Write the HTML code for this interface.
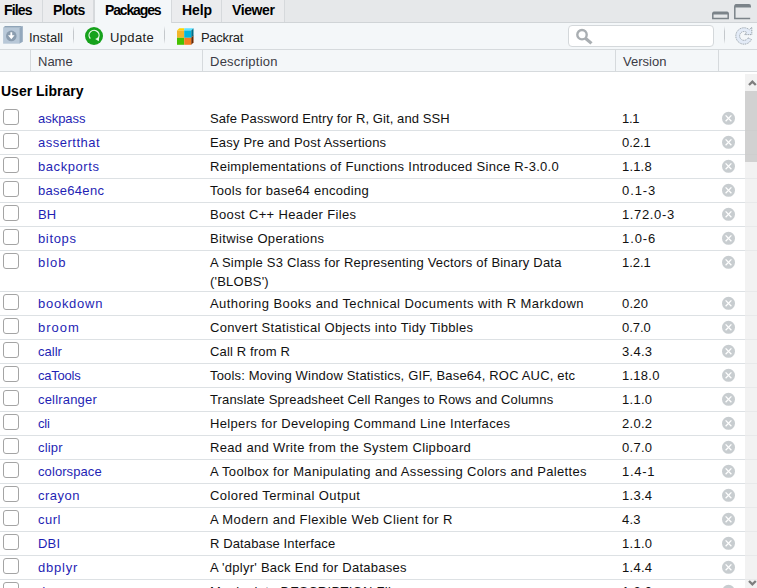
<!DOCTYPE html>
<html><head><meta charset="utf-8"><style>
*{box-sizing:border-box}
html,body{margin:0;padding:0;width:757px;height:588px;overflow:hidden;background:#fff;font-family:"Liberation Sans",sans-serif;font-size:13px;color:#000}
.abs{position:absolute}
#tabs{position:absolute;left:0;top:0;width:757px;height:23px;background:#e6e8ea;border-bottom:1px solid #d0d4d7}
.tab{position:absolute;top:0;height:22px;font-weight:bold;font-size:14px;line-height:20px;letter-spacing:-0.4px;border-right:1px solid #d6d9dc;color:#000;background:#ebecee}
.tab.act{background:#f4f7f9;height:23px;border-left:1px solid #d6d9dc}
#toolbar{position:absolute;left:0;top:23px;width:757px;height:27px;background:#f4f7f9;border-bottom:1px solid #d6dadd}
.tl{position:absolute;top:6px;font-size:13px;color:#222;line-height:17px}
.sep{position:absolute;top:3px;width:1px;height:18px;background:linear-gradient(#f4f7f9,#c4c8cc 30%,#c4c8cc 70%,#f4f7f9)}
#search{position:absolute;left:568px;top:2px;width:146px;height:22px;background:#fff;border:1px solid #d4d8db;border-radius:4px}
#hdr{position:absolute;left:0;top:50px;width:757px;height:22px;background:#f4f7f9;border-bottom:1px solid #d6dadd}
.hd{position:absolute;top:0;height:21px;line-height:24px;color:#3b3b45;font-size:13px}
.vd{position:absolute;top:0;width:1px;height:21px;background:#d6dadd}
.row{position:absolute;left:0;width:757px;border-bottom:1px solid #dde1e4}
.cb{position:absolute;left:3px;top:2px;width:16px;height:16px;border:1.2px solid #a4a4a4;border-radius:3px;background:#fff}
.nm{position:absolute;left:38px;top:4px;color:#1f1fb4;line-height:15px}
.ds{position:absolute;left:210px;color:#111;line-height:19px;top:2px}
.vr{position:absolute;left:622px;top:4px;color:#111;line-height:15px}
.rm{position:absolute;left:721px;top:4px}
#sb{position:absolute;left:745px;top:74px;width:12px;height:514px;background:rgba(236,236,236,0.7)}
</style></head><body>
<div id="tabs">
  <div class="tab" style="left:0;width:43px;padding-left:4px;letter-spacing:-0.85px">Files</div>
  <div class="tab" style="left:43px;width:51px;padding-left:10px;letter-spacing:-0.5px">Plots</div>
  <div class="tab act" style="left:94px;width:78px;padding-left:10px;letter-spacing:-1.15px">Packages</div>
  <div class="tab" style="left:172px;width:50px;padding-left:10px;letter-spacing:-0.1px">Help</div>
  <div class="tab" style="left:222px;width:63px;padding-left:10px">Viewer</div>
  <svg class="abs" style="left:711px;top:3px" width="46" height="18" viewBox="0 0 46 18">
    <path d="M1.8 10.5 L1.8 15.4 L17.2 15.4 L17.2 10.5" fill="none" stroke="#7b8389" stroke-width="1.5"/>
    <path d="M1 11.5 Q1 8.4 3 8.4 L16 8.4 Q18 8.4 18 11.5 Z" fill="#7b8389"/>
    <path d="M23.8 4 L23.8 15.4 L39.2 15.4" fill="none" stroke="#7b8389" stroke-width="1.5"/>
    <path d="M23 4.6 Q23 1.1 25 1.1 L38 1.1 Q40 1.1 40 3.5 L40 4.6 Z" fill="#7b8389"/>
  </svg>
</div>
<div id="toolbar">
  <svg class="abs" style="left:2px;top:2px" width="22" height="20" viewBox="0 0 22 20">
    <path d="M1.1 2.8 L3 1.1 L20.8 1.1 L17.2 2.8 Z" fill="#8fa4b8"/>
    <path d="M17.2 2.8 L20.8 1.1 L20.8 16.8 L17.2 18.7 Z" fill="#93a8bd"/>
    <rect x="1.1" y="2.8" width="16.1" height="15.9" fill="#b8c8d8"/>
    <circle cx="9.3" cy="10.9" r="5.3" fill="#8b9daf"/>
    <path d="M8.4 7.3 H10.2 V10.3 H12.6 L9.3 14.3 L6 10.3 H8.4 Z" fill="#fff"/>
  </svg>
  <span class="tl" style="left:29px">Install</span>
  <div class="sep" style="left:73px"></div>
  <svg class="abs" style="left:84px;top:3px" width="20" height="20" viewBox="0 0 20 20">
    <circle cx="10" cy="10" r="9" fill="#16a21c"/>
    <path d="M6.3 12.6 A5 5 0 1 1 13.6 12.8" fill="none" stroke="#e8f8e8" stroke-width="1.3"/>
    <path d="M11.2 12.9 L15.2 11 L14.8 15.2 Z" fill="#e8f8e8"/>
  </svg>
  <span class="tl" style="left:110px;letter-spacing:0.35px">Update</span>
  <div class="sep" style="left:164px"></div>
  <svg class="abs" style="left:176px;top:4px" width="19" height="19" viewBox="0 0 19 19">
    <path d="M1 3.5 L3 1 L17.5 1 L17.5 15.5 L15.5 18 L1 18 Z" fill="#000" opacity="0"/>
    <path d="M1 3.5 L3.3 1.2 L8.5 1.2 L8 3.5 Z" fill="#ffd400"/>
    <path d="M8 3.5 L8.5 1.2 L17.5 1.2 L15.3 3.5 Z" fill="#5ee2ff"/>
    <rect x="1" y="3.5" width="7.2" height="7.3" fill="#f1b42a"/>
    <rect x="8.2" y="3.5" width="7.1" height="7.3" fill="#00b6dd"/>
    <rect x="1" y="10.8" width="7.2" height="7" fill="#46c100"/>
    <rect x="8.2" y="10.8" width="7.1" height="7" fill="#f57e22"/>
    <path d="M15.3 3.5 L17.5 1.2 L17.5 8.6 L15.3 10.8 Z" fill="#006f88"/>
    <path d="M15.3 10.8 L17.5 8.6 L17.5 15.6 L15.3 17.8 Z" fill="#6a2800"/>
  </svg>
  <span class="tl" style="left:201px;letter-spacing:-0.3px">Packrat</span>
  <div id="search">
    <svg class="abs" style="left:6px;top:2px" width="20" height="18" viewBox="0 0 20 18">
      <circle cx="7" cy="6.7" r="4.7" fill="none" stroke="#a9aeb2" stroke-width="2.4"/>
      <path d="M10.4 10.2 L16.5 15.4" stroke="#a9aeb2" stroke-width="3.2"/>
    </svg>
  </div>
  <div class="sep" style="left:724px"></div>
  <svg class="abs" style="left:734px;top:3px" width="23" height="21" viewBox="0 0 23 21">
    <path d="M17.43 13.47 A8.2 8.2 0 1 1 15.3 3.7 L17.8 1.2 L17.8 8.6 L10.6 8.6 L12.9 6.6 A4.4 4.4 0 1 0 13.99 11.86 Z" fill="#e3ebf7" stroke="#8f98a2" stroke-width="0.9" stroke-dasharray="1.1 0.7"/>
  </svg>
</div>
<div id="hdr">
  <div class="vd" style="left:30px"></div>
  <span class="hd" style="left:38px">Name</span>
  <div class="vd" style="left:202px"></div>
  <span class="hd" style="left:210px;letter-spacing:0.25px">Description</span>
  <div class="vd" style="left:615px"></div>
  <span class="hd" style="left:623px">Version</span>
  <div class="vd" style="left:718px"></div>
</div>
<div class="abs" style="left:1px;top:83px;font-weight:bold;font-size:14px">User Library</div>
<div class="row" style="top:107px;height:24px"><div class="cb"></div><span class="nm" style="letter-spacing:-0.033px">askpass</span><span class="ds" style="letter-spacing:0.089px">Safe Password Entry for R, Git, and SSH</span><span class="vr" style="letter-spacing:-0.250px">1.1</span><svg class="rm" width="15" height="15" viewBox="0 0 15 15"><circle cx="7.5" cy="7.3" r="6.5" fill="#c8cdd0"/><path d="M4.6 4.4L10.4 10.2M10.4 4.4L4.6 10.2" stroke="#fff" stroke-width="1.3"/></svg></div>
<div class="row" style="top:131px;height:24px"><div class="cb"></div><span class="nm" style="letter-spacing:0.500px">assertthat</span><span class="ds" style="letter-spacing:0.178px">Easy Pre and Post Assertions</span><span class="vr" style="letter-spacing:-0.025px">0.2.1</span><svg class="rm" width="15" height="15" viewBox="0 0 15 15"><circle cx="7.5" cy="7.3" r="6.5" fill="#c8cdd0"/><path d="M4.6 4.4L10.4 10.2M10.4 4.4L4.6 10.2" stroke="#fff" stroke-width="1.3"/></svg></div>
<div class="row" style="top:155px;height:24px"><div class="cb"></div><span class="nm" style="letter-spacing:0.575px">backports</span><span class="ds" style="letter-spacing:0.289px">Reimplementations of Functions Introduced Since R-3.0.0</span><span class="vr" style="letter-spacing:0.175px">1.1.8</span><svg class="rm" width="15" height="15" viewBox="0 0 15 15"><circle cx="7.5" cy="7.3" r="6.5" fill="#c8cdd0"/><path d="M4.6 4.4L10.4 10.2M10.4 4.4L4.6 10.2" stroke="#fff" stroke-width="1.3"/></svg></div>
<div class="row" style="top:179px;height:24px"><div class="cb"></div><span class="nm" style="letter-spacing:0.287px">base64enc</span><span class="ds" style="letter-spacing:0.292px">Tools for base64 encoding</span><span class="vr" style="letter-spacing:0.900px">0.1-3</span><svg class="rm" width="15" height="15" viewBox="0 0 15 15"><circle cx="7.5" cy="7.3" r="6.5" fill="#c8cdd0"/><path d="M4.6 4.4L10.4 10.2M10.4 4.4L4.6 10.2" stroke="#fff" stroke-width="1.3"/></svg></div>
<div class="row" style="top:203px;height:24px"><div class="cb"></div><span class="nm" style="letter-spacing:0.000px">BH</span><span class="ds" style="letter-spacing:0.348px">Boost C++ Header Files</span><span class="vr" style="letter-spacing:0.629px">1.72.0-3</span><svg class="rm" width="15" height="15" viewBox="0 0 15 15"><circle cx="7.5" cy="7.3" r="6.5" fill="#c8cdd0"/><path d="M4.6 4.4L10.4 10.2M10.4 4.4L4.6 10.2" stroke="#fff" stroke-width="1.3"/></svg></div>
<div class="row" style="top:227px;height:24px"><div class="cb"></div><span class="nm" style="letter-spacing:0.640px">bitops</span><span class="ds" style="letter-spacing:0.329px">Bitwise Operations</span><span class="vr" style="letter-spacing:0.900px">1.0-6</span><svg class="rm" width="15" height="15" viewBox="0 0 15 15"><circle cx="7.5" cy="7.3" r="6.5" fill="#c8cdd0"/><path d="M4.6 4.4L10.4 10.2M10.4 4.4L4.6 10.2" stroke="#fff" stroke-width="1.3"/></svg></div>
<div class="row" style="top:251px;height:41px"><div class="cb"></div><span class="nm" style="letter-spacing:0.933px">blob</span><span class="ds" style="letter-spacing:0.211px">A Simple S3 Class for Representing Vectors of Binary Data<br>('BLOBS')</span><span class="vr" style="letter-spacing:-0.025px">1.2.1</span><svg class="rm" width="15" height="15" viewBox="0 0 15 15"><circle cx="7.5" cy="7.3" r="6.5" fill="#c8cdd0"/><path d="M4.6 4.4L10.4 10.2M10.4 4.4L4.6 10.2" stroke="#fff" stroke-width="1.3"/></svg></div>
<div class="row" style="top:292px;height:24px"><div class="cb"></div><span class="nm" style="letter-spacing:0.729px">bookdown</span><span class="ds" style="letter-spacing:0.417px">Authoring Books and Technical Documents with R Markdown</span><span class="vr" style="letter-spacing:0.233px">0.20</span><svg class="rm" width="15" height="15" viewBox="0 0 15 15"><circle cx="7.5" cy="7.3" r="6.5" fill="#c8cdd0"/><path d="M4.6 4.4L10.4 10.2M10.4 4.4L4.6 10.2" stroke="#fff" stroke-width="1.3"/></svg></div>
<div class="row" style="top:316px;height:24px"><div class="cb"></div><span class="nm" style="letter-spacing:1.000px">broom</span><span class="ds" style="letter-spacing:0.311px">Convert Statistical Objects into Tidy Tibbles</span><span class="vr" style="letter-spacing:-0.025px">0.7.0</span><svg class="rm" width="15" height="15" viewBox="0 0 15 15"><circle cx="7.5" cy="7.3" r="6.5" fill="#c8cdd0"/><path d="M4.6 4.4L10.4 10.2M10.4 4.4L4.6 10.2" stroke="#fff" stroke-width="1.3"/></svg></div>
<div class="row" style="top:340px;height:24px"><div class="cb"></div><span class="nm" style="letter-spacing:0.025px">callr</span><span class="ds" style="letter-spacing:0.150px">Call R from R</span><span class="vr" style="letter-spacing:0.275px">3.4.3</span><svg class="rm" width="15" height="15" viewBox="0 0 15 15"><circle cx="7.5" cy="7.3" r="6.5" fill="#c8cdd0"/><path d="M4.6 4.4L10.4 10.2M10.4 4.4L4.6 10.2" stroke="#fff" stroke-width="1.3"/></svg></div>
<div class="row" style="top:364px;height:24px"><div class="cb"></div><span class="nm" style="letter-spacing:-0.233px">caTools</span><span class="ds" style="letter-spacing:0.181px">Tools: Moving Window Statistics, GIF, Base64, ROC AUC, etc</span><span class="vr" style="letter-spacing:0.260px">1.18.0</span><svg class="rm" width="15" height="15" viewBox="0 0 15 15"><circle cx="7.5" cy="7.3" r="6.5" fill="#c8cdd0"/><path d="M4.6 4.4L10.4 10.2M10.4 4.4L4.6 10.2" stroke="#fff" stroke-width="1.3"/></svg></div>
<div class="row" style="top:388px;height:24px"><div class="cb"></div><span class="nm" style="letter-spacing:0.189px">cellranger</span><span class="ds" style="letter-spacing:0.133px">Translate Spreadsheet Cell Ranges to Rows and Columns</span><span class="vr" style="letter-spacing:0.275px">1.1.0</span><svg class="rm" width="15" height="15" viewBox="0 0 15 15"><circle cx="7.5" cy="7.3" r="6.5" fill="#c8cdd0"/><path d="M4.6 4.4L10.4 10.2M10.4 4.4L4.6 10.2" stroke="#fff" stroke-width="1.3"/></svg></div>
<div class="row" style="top:412px;height:24px"><div class="cb"></div><span class="nm" style="letter-spacing:-0.150px">cli</span><span class="ds" style="letter-spacing:0.342px">Helpers for Developing Command Line Interfaces</span><span class="vr" style="letter-spacing:0.275px">2.0.2</span><svg class="rm" width="15" height="15" viewBox="0 0 15 15"><circle cx="7.5" cy="7.3" r="6.5" fill="#c8cdd0"/><path d="M4.6 4.4L10.4 10.2M10.4 4.4L4.6 10.2" stroke="#fff" stroke-width="1.3"/></svg></div>
<div class="row" style="top:436px;height:24px"><div class="cb"></div><span class="nm" style="letter-spacing:0.175px">clipr</span><span class="ds" style="letter-spacing:0.338px">Read and Write from the System Clipboard</span><span class="vr" style="letter-spacing:0.275px">0.7.0</span><svg class="rm" width="15" height="15" viewBox="0 0 15 15"><circle cx="7.5" cy="7.3" r="6.5" fill="#c8cdd0"/><path d="M4.6 4.4L10.4 10.2M10.4 4.4L4.6 10.2" stroke="#fff" stroke-width="1.3"/></svg></div>
<div class="row" style="top:460px;height:24px"><div class="cb"></div><span class="nm" style="letter-spacing:0.089px">colorspace</span><span class="ds" style="letter-spacing:0.334px">A Toolbox for Manipulating and Assessing Colors and Palettes</span><span class="vr" style="letter-spacing:0.700px">1.4-1</span><svg class="rm" width="15" height="15" viewBox="0 0 15 15"><circle cx="7.5" cy="7.3" r="6.5" fill="#c8cdd0"/><path d="M4.6 4.4L10.4 10.2M10.4 4.4L4.6 10.2" stroke="#fff" stroke-width="1.3"/></svg></div>
<div class="row" style="top:484px;height:24px"><div class="cb"></div><span class="nm" style="letter-spacing:0.480px">crayon</span><span class="ds" style="letter-spacing:0.423px">Colored Terminal Output</span><span class="vr" style="letter-spacing:0.275px">1.3.4</span><svg class="rm" width="15" height="15" viewBox="0 0 15 15"><circle cx="7.5" cy="7.3" r="6.5" fill="#c8cdd0"/><path d="M4.6 4.4L10.4 10.2M10.4 4.4L4.6 10.2" stroke="#fff" stroke-width="1.3"/></svg></div>
<div class="row" style="top:508px;height:24px"><div class="cb"></div><span class="nm" style="letter-spacing:0.467px">curl</span><span class="ds" style="letter-spacing:0.386px">A Modern and Flexible Web Client for R</span><span class="vr" style="letter-spacing:0.150px">4.3</span><svg class="rm" width="15" height="15" viewBox="0 0 15 15"><circle cx="7.5" cy="7.3" r="6.5" fill="#c8cdd0"/><path d="M4.6 4.4L10.4 10.2M10.4 4.4L4.6 10.2" stroke="#fff" stroke-width="1.3"/></svg></div>
<div class="row" style="top:532px;height:24px"><div class="cb"></div><span class="nm" style="letter-spacing:0.200px">DBI</span><span class="ds" style="letter-spacing:0.121px">R Database Interface</span><span class="vr" style="letter-spacing:0.275px">1.1.0</span><svg class="rm" width="15" height="15" viewBox="0 0 15 15"><circle cx="7.5" cy="7.3" r="6.5" fill="#c8cdd0"/><path d="M4.6 4.4L10.4 10.2M10.4 4.4L4.6 10.2" stroke="#fff" stroke-width="1.3"/></svg></div>
<div class="row" style="top:556px;height:24px"><div class="cb"></div><span class="nm" style="letter-spacing:0.780px">dbplyr</span><span class="ds" style="letter-spacing:0.258px">A 'dplyr' Back End for Databases</span><span class="vr" style="letter-spacing:0.275px">1.4.4</span><svg class="rm" width="15" height="15" viewBox="0 0 15 15"><circle cx="7.5" cy="7.3" r="6.5" fill="#c8cdd0"/><path d="M4.6 4.4L10.4 10.2M10.4 4.4L4.6 10.2" stroke="#fff" stroke-width="1.3"/></svg></div>
<div class="row" style="top:580px;height:24px"><div class="cb"></div><span class="nm" style="letter-spacing:0.300px">desc</span><span class="ds" style="letter-spacing:0.300px">Manipulate DESCRIPTION Files</span><span class="vr" style="letter-spacing:0.275px">1.2.0</span><svg class="rm" width="15" height="15" viewBox="0 0 15 15"><circle cx="7.5" cy="7.3" r="6.5" fill="#c8cdd0"/><path d="M4.6 4.4L10.4 10.2M10.4 4.4L4.6 10.2" stroke="#fff" stroke-width="1.3"/></svg></div>
<div id="sb">
  
  <svg class="abs" style="left:3px;top:4px" width="10" height="9" viewBox="0 0 10 9"><path d="M1 7 L4.4 3.6 L7.8 7" fill="none" stroke="#7e7e7e" stroke-width="2.3"/></svg>
  <div class="abs" style="left:0;top:17px;width:12px;height:71px;background:rgba(196,196,196,0.72)"></div>
  <svg class="abs" style="left:3px;top:505px" width="10" height="9" viewBox="0 0 10 9"><path d="M1 2 L4.4 5.4 L7.8 2" fill="none" stroke="#7e7e7e" stroke-width="2.3"/></svg>
</div>
</body></html>
